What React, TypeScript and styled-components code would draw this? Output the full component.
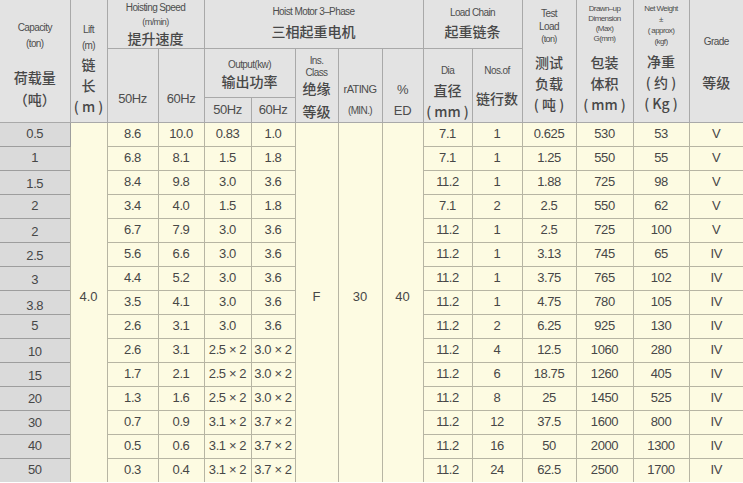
import styled, { createGlobalStyle } from "styled-components";

const GlobalStyle = createGlobalStyle`
  html, body {
    margin: 0;
    padding: 0;
    background: #ffffff;
  }
  body {
    font-family: "Liberation Sans", "Noto Sans CJK SC", Arial, sans-serif;
    color: #4a4a4a;
  }
`;

const Table = styled.table`
  width: 743px;
  border-collapse: collapse;
  table-layout: fixed;
  border-style: hidden;
`;

const HeadRow = styled.tr<{ $h: number }>`
  height: ${(p) => p.$h}px;
`;

const BodyRow = styled.tr`
  height: 24px;
`;

const HeadCell = styled.th<{ $pt?: number }>`
  background: #e3e3e3;
  border: 1px solid #a9a9a9;
  padding: ${(p) => (p.$pt === undefined ? 0 : p.$pt)}px 0 0;
  vertical-align: ${(p) => (p.$pt === undefined ? "middle" : "top")};
  text-align: center;
  font-weight: normal;
  color: #4e4e4e;
  overflow: hidden;
`;

const En = styled.div<{ $size?: number; $lh?: number }>`
  font-size: ${(p) => p.$size || 10}px;
  line-height: ${(p) => p.$lh || 14}px;
  letter-spacing: -0.6px;
  white-space: nowrap;
`;

const Cn = styled.div<{ $lh?: number }>`
  font-family: "Noto Sans CJK SC", sans-serif;
  font-size: 14px;
  font-weight: 500;
  line-height: ${(p) => p.$lh || 20}px;
  white-space: nowrap;
  color: #484848;
`;

const Hz = styled.div`
  font-size: 13px;
  line-height: 18px;
  letter-spacing: -0.4px;
`;

const Gap = styled.div<{ $h: number }>`
  height: ${(p) => p.$h}px;
`;

const Cell = styled.td<{ $cap?: boolean; $drop?: number }>`
  background: ${(p) => (p.$cap ? "#dadada" : "#fdfbe2")};
  border: 1px solid ${(p) => (p.$cap ? "#9d9d9d" : "#b7b5a3")};
  padding: ${(p) => (p.$drop ? `${p.$drop}px 0 0` : 0)};
  text-align: center;
  vertical-align: middle;
  font-size: 13px;
  line-height: 16px;
  letter-spacing: -0.4px;
  white-space: nowrap;
  color: #474747;
`;

const Merged = styled.td`
  background: #fdfbe2;
  border: 1px solid #b7b5a3;
  padding: 0 0 12px;
  text-align: center;
  vertical-align: middle;
  font-size: 13px;
  color: #474747;
`;

type Row = {
  cap: string;
  drop?: number;
  s50: string;
  s60: string;
  o50: string;
  o60: string;
  dia: string;
  nos: string;
  test: string;
  drawn: string;
  net: string;
  grade: string;
};

const rows: Row[] = [
  { cap: "0.5", s50: "8.6", s60: "10.0", o50: "0.83", o60: "1.0", dia: "7.1", nos: "1", test: "0.625", drawn: "530", net: "53", grade: "V" },
  { cap: "1", s50: "6.8", s60: "8.1", o50: "1.5", o60: "1.8", dia: "7.1", nos: "1", test: "1.25", drawn: "550", net: "55", grade: "V" },
  { cap: "1.5", drop: 3, s50: "8.4", s60: "9.8", o50: "3.0", o60: "3.6", dia: "11.2", nos: "1", test: "1.88", drawn: "725", net: "98", grade: "V" },
  { cap: "2", s50: "3.4", s60: "4.0", o50: "1.5", o60: "1.8", dia: "7.1", nos: "2", test: "2.5", drawn: "550", net: "62", grade: "V" },
  { cap: "2", drop: 3, s50: "6.7", s60: "7.9", o50: "3.0", o60: "3.6", dia: "11.2", nos: "1", test: "2.5", drawn: "725", net: "100", grade: "V" },
  { cap: "2.5", drop: 4, s50: "5.6", s60: "6.6", o50: "3.0", o60: "3.6", dia: "11.2", nos: "1", test: "3.13", drawn: "745", net: "65", grade: "IV" },
  { cap: "3", drop: 3, s50: "4.4", s60: "5.2", o50: "3.0", o60: "3.6", dia: "11.2", nos: "1", test: "3.75", drawn: "765", net: "102", grade: "IV" },
  { cap: "3.8", drop: 7, s50: "3.5", s60: "4.1", o50: "3.0", o60: "3.6", dia: "11.2", nos: "1", test: "4.75", drawn: "780", net: "105", grade: "IV" },
  { cap: "5", s50: "2.6", s60: "3.1", o50: "3.0", o60: "3.6", dia: "11.2", nos: "2", test: "6.25", drawn: "925", net: "130", grade: "IV" },
  { cap: "10", drop: 4, s50: "2.6", s60: "3.1", o50: "2.5 × 2", o60: "3.0 × 2", dia: "11.2", nos: "4", test: "12.5", drawn: "1060", net: "280", grade: "IV" },
  { cap: "15", drop: 3, s50: "1.7", s60: "2.1", o50: "2.5 × 2", o60: "3.0 × 2", dia: "11.2", nos: "6", test: "18.75", drawn: "1260", net: "405", grade: "IV" },
  { cap: "20", drop: 2, s50: "1.3", s60: "1.6", o50: "2.5 × 2", o60: "3.0 × 2", dia: "11.2", nos: "8", test: "25", drawn: "1450", net: "525", grade: "IV" },
  { cap: "30", drop: 2, s50: "0.7", s60: "0.9", o50: "3.1 × 2", o60: "3.7 × 2", dia: "11.2", nos: "12", test: "37.5", drawn: "1600", net: "800", grade: "IV" },
  { cap: "40", s50: "0.5", s60: "0.6", o50: "3.1 × 2", o60: "3.7 × 2", dia: "11.2", nos: "16", test: "50", drawn: "2000", net: "1300", grade: "IV" },
  { cap: "50", s50: "0.3", s60: "0.4", o50: "3.1 × 2", o60: "3.7 × 2", dia: "11.2", nos: "24", test: "62.5", drawn: "2500", net: "1700", grade: "IV" },
];

const widths = [70, 37, 51, 46, 47, 44, 43, 44, 41, 49, 50, 54, 57, 56, 54];

const App = () => {
  return (
    <>
      <GlobalStyle />
      <Table>
        <colgroup>
          {widths.map((w, i) => (
            <col key={i} style={{ width: w }} />
          ))}
        </colgroup>
        <thead>
          <HeadRow $h={48}>
            <HeadCell rowSpan={3} $pt={20}>
              <En $lh={16}>Capacity</En>
              <En $lh={16}>(ton)</En>
              <Gap $h={14} />
              <Cn $lh={22}>荷载量</Cn>
              <Cn $lh={22}>（吨）</Cn>
            </HeadCell>
            <HeadCell rowSpan={3} $pt={22}>
              <En $lh={16}>Lift</En>
              <En $lh={16}>(m)</En>
              <Cn $lh={21}>链</Cn>
              <Cn $lh={21}>长</Cn>
              <Cn $lh={21}>( m )</Cn>
            </HeadCell>
            <HeadCell colSpan={2} $pt={1}>
              <En $lh={14}>Hoisting Speed</En>
              <En $size={9} $lh={14}>(m/min)</En>
              <Cn $lh={18}>提升速度</Cn>
            </HeadCell>
            <HeadCell colSpan={5} $pt={4}>
              <En $lh={16}>Hoist Motor 3–Phase</En>
              <Cn $lh={22}>三相起重电机</Cn>
            </HeadCell>
            <HeadCell colSpan={2} $pt={5}>
              <En $lh={16}>Load Chain</En>
              <Cn $lh={20}>起重链条</Cn>
            </HeadCell>
            <HeadCell rowSpan={3} $pt={7}>
              <En $lh={13}>Test</En>
              <En $lh={13}>Load</En>
              <En $size={9} $lh={13}>(ton)</En>
              <Gap $h={6} />
              <Cn $lh={21}>测试</Cn>
              <Cn $lh={21}>负载</Cn>
              <Cn $lh={21}>( 吨 )</Cn>
            </HeadCell>
            <HeadCell rowSpan={3} $pt={4}>
              <En $size={8} $lh={10}>Drawn–up</En>
              <En $size={8} $lh={10}>Dimension</En>
              <En $size={8} $lh={10}>(Max)</En>
              <En $size={8} $lh={10}>G(mm)</En>
              <Gap $h={8} />
              <Cn $lh={21}>包装</Cn>
              <Cn $lh={21}>体积</Cn>
              <Cn $lh={21}>( mm )</Cn>
            </HeadCell>
            <HeadCell rowSpan={3} $pt={3}>
              <En $size={8} $lh={11}>Net Weight</En>
              <En $size={8} $lh={11}>±</En>
              <En $size={8} $lh={11}>( approx)</En>
              <En $size={8} $lh={11}>(kgf)</En>
              <Gap $h={4} />
              <Cn $lh={21}>净重</Cn>
              <Cn $lh={21}>( 约 )</Cn>
              <Cn $lh={21}>( Kg )</Cn>
            </HeadCell>
            <HeadCell rowSpan={3} $pt={34}>
              <En $lh={16}>Grade</En>
              <Gap $h={22} />
              <Cn $lh={20}>等级</Cn>
            </HeadCell>
          </HeadRow>
          <HeadRow $h={49}>
            <HeadCell rowSpan={2} $pt={41}>
              <Hz>50Hz</Hz>
            </HeadCell>
            <HeadCell rowSpan={2} $pt={41}>
              <Hz>60Hz</Hz>
            </HeadCell>
            <HeadCell colSpan={2} $pt={8}>
              <En $lh={15}>Output(kw)</En>
              <Cn $lh={18}>输出功率</Cn>
            </HeadCell>
            <HeadCell rowSpan={2} $pt={6}>
              <En $lh={12}>Ins.</En>
              <En $lh={12}>Class</En>
              <Cn $lh={18}>绝缘</Cn>
              <Gap $h={5} />
              <Cn $lh={18}>等级</Cn>
            </HeadCell>
            <HeadCell rowSpan={2} $pt={30}>
              <En $size={11} $lh={21}>rATING</En>
              <En $size={10} $lh={21}>(MIN.)</En>
            </HeadCell>
            <HeadCell rowSpan={2} $pt={30}>
              <Hz style={{ lineHeight: "21px" }}>%</Hz>
              <Hz style={{ lineHeight: "21px" }}>ED</Hz>
            </HeadCell>
            <HeadCell rowSpan={2} $pt={12}>
              <En $lh={19}>Dia</En>
              <Cn $lh={21}>直径</Cn>
              <Cn $lh={21}>( mm )</Cn>
            </HeadCell>
            <HeadCell rowSpan={2} $pt={12}>
              <En $lh={19}>Nos.of</En>
              <Gap $h={8} />
              <Cn $lh={20}>链行数</Cn>
            </HeadCell>
          </HeadRow>
          <HeadRow $h={25}>
            <HeadCell>
              <Hz>50Hz</Hz>
            </HeadCell>
            <HeadCell>
              <Hz>60Hz</Hz>
            </HeadCell>
          </HeadRow>
        </thead>
        <tbody>
          {rows.map((r, i) => (
            <BodyRow key={i}>
              <Cell $cap $drop={r.drop}>
                {r.cap}
              </Cell>
              {i === 0 && <Merged rowSpan={rows.length}>4.0</Merged>}
              <Cell>{r.s50}</Cell>
              <Cell>{r.s60}</Cell>
              <Cell>{r.o50}</Cell>
              <Cell>{r.o60}</Cell>
              {i === 0 && <Merged rowSpan={rows.length}>F</Merged>}
              {i === 0 && <Merged rowSpan={rows.length}>30</Merged>}
              {i === 0 && <Merged rowSpan={rows.length}>40</Merged>}
              <Cell>{r.dia}</Cell>
              <Cell>{r.nos}</Cell>
              <Cell>{r.test}</Cell>
              <Cell>{r.drawn}</Cell>
              <Cell>{r.net}</Cell>
              <Cell>{r.grade}</Cell>
            </BodyRow>
          ))}
        </tbody>
      </Table>
    </>
  );
};

export default App;
